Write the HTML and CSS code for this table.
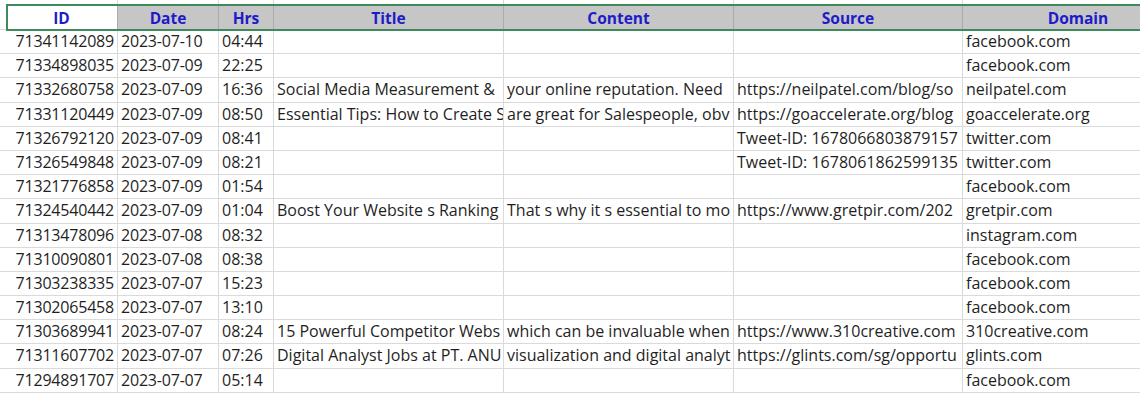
FILE: index.html
```html
<!DOCTYPE html>
<html lang="en">
<head>
<meta charset="utf-8">
<title>Sheet</title>
<link rel="stylesheet" href="styles.css">
</head>
<body>
<div class="sheet">
  <div class="row strip">
    <div class="cell lead"></div><div class="cell"></div><div class="cell"></div><div class="cell"></div><div class="cell"></div><div class="cell"></div><div class="cell"></div><div class="cell"></div>
  </div>
  <div class="row hdr">
    <div class="cell lead"></div>
    <div class="cell active">ID</div>
    <div class="cell">Date</div>
    <div class="cell">Hrs</div>
    <div class="cell">Title</div>
    <div class="cell">Content</div>
    <div class="cell">Source</div>
    <div class="cell">Domain</div>
    <div class="sel"></div>
  </div>

  <div class="row"><div class="cell lead"></div><div class="cell num">71341142089</div><div class="cell date">2023-07-10</div><div class="cell">04:44</div><div class="cell"></div><div class="cell"></div><div class="cell"></div><div class="cell">facebook.com</div></div>
  <div class="row"><div class="cell lead"></div><div class="cell num">71334898035</div><div class="cell date">2023-07-09</div><div class="cell">22:25</div><div class="cell"></div><div class="cell"></div><div class="cell"></div><div class="cell">facebook.com</div></div>
  <div class="row"><div class="cell lead"></div><div class="cell num">71332680758</div><div class="cell date">2023-07-09</div><div class="cell">16:36</div><div class="cell">Social Media Measurement &amp;</div><div class="cell">your online reputation. Need</div><div class="cell">https://neilpatel.com/blog/so</div><div class="cell">neilpatel.com</div></div>
  <div class="row"><div class="cell lead"></div><div class="cell num">71331120449</div><div class="cell date">2023-07-09</div><div class="cell">08:50</div><div class="cell">Essential Tips: How to Create S</div><div class="cell">are great for Salespeople, obv</div><div class="cell">https://goaccelerate.org/blog</div><div class="cell">goaccelerate.org</div></div>
  <div class="row"><div class="cell lead"></div><div class="cell num">71326792120</div><div class="cell date">2023-07-09</div><div class="cell">08:41</div><div class="cell"></div><div class="cell"></div><div class="cell">Tweet-ID: 1678066803879157</div><div class="cell">twitter.com</div></div>
  <div class="row"><div class="cell lead"></div><div class="cell num">71326549848</div><div class="cell date">2023-07-09</div><div class="cell">08:21</div><div class="cell"></div><div class="cell"></div><div class="cell">Tweet-ID: 1678061862599135</div><div class="cell">twitter.com</div></div>
  <div class="row"><div class="cell lead"></div><div class="cell num">71321776858</div><div class="cell date">2023-07-09</div><div class="cell">01:54</div><div class="cell"></div><div class="cell"></div><div class="cell"></div><div class="cell">facebook.com</div></div>
  <div class="row"><div class="cell lead"></div><div class="cell num">71324540442</div><div class="cell date">2023-07-09</div><div class="cell">01:04</div><div class="cell">Boost Your Website s Ranking</div><div class="cell">That s why it s essential to mo</div><div class="cell">https://www.gretpir.com/202</div><div class="cell">gretpir.com</div></div>
  <div class="row"><div class="cell lead"></div><div class="cell num">71313478096</div><div class="cell date">2023-07-08</div><div class="cell">08:32</div><div class="cell"></div><div class="cell"></div><div class="cell"></div><div class="cell">instagram.com</div></div>
  <div class="row"><div class="cell lead"></div><div class="cell num">71310090801</div><div class="cell date">2023-07-08</div><div class="cell">08:38</div><div class="cell"></div><div class="cell"></div><div class="cell"></div><div class="cell">facebook.com</div></div>
  <div class="row"><div class="cell lead"></div><div class="cell num">71303238335</div><div class="cell date">2023-07-07</div><div class="cell">15:23</div><div class="cell"></div><div class="cell"></div><div class="cell"></div><div class="cell">facebook.com</div></div>
  <div class="row"><div class="cell lead"></div><div class="cell num">71302065458</div><div class="cell date">2023-07-07</div><div class="cell">13:10</div><div class="cell"></div><div class="cell"></div><div class="cell"></div><div class="cell">facebook.com</div></div>
  <div class="row"><div class="cell lead"></div><div class="cell num">71303689941</div><div class="cell date">2023-07-07</div><div class="cell">08:24</div><div class="cell">15 Powerful Competitor Webs</div><div class="cell">which can be invaluable when</div><div class="cell">https://www.310creative.com</div><div class="cell">310creative.com</div></div>
  <div class="row"><div class="cell lead"></div><div class="cell num">71311607702</div><div class="cell date">2023-07-07</div><div class="cell">07:26</div><div class="cell">Digital Analyst Jobs at PT. ANU</div><div class="cell">visualization and digital analyt</div><div class="cell">https://glints.com/sg/opportu</div><div class="cell">glints.com</div></div>
  <div class="row"><div class="cell lead"></div><div class="cell num">71294891707</div><div class="cell date">2023-07-07</div><div class="cell">05:14</div><div class="cell"></div><div class="cell"></div><div class="cell"></div><div class="cell">facebook.com</div></div>
</div>
</body>
</html>
```
FILE: styles.css
```css
html, body {
  margin: 0;
  padding: 0;
  background: #ffffff;
  overflow: hidden;
}

.sheet {
  width: 1194px;
  display: flex;
  flex-direction: column;
  font-family: "Open Sans", "Liberation Sans", sans-serif;
  font-size: 16px;
  color: #1f1f1f;
}

.row {
  display: grid;
  grid-template-columns: 6px 112px 101px 55px 230px 230px 229px 231px;
  height: 24.2px;
}

.cell {
  box-sizing: border-box;
  border-right: 1px solid #dadada;
  border-bottom: 1px solid #dadada;
  padding: 0 3px;
  line-height: 22px;
  white-space: nowrap;
  overflow: hidden;
  text-overflow: clip;
}

.cell.lead {
  border-right: none;
  padding: 0;
}

.cell.num {
  text-align: right;
  letter-spacing: -0.2px;
}

.cell.date {
  letter-spacing: -0.2px;
}

.strip {
  height: 4px;
}

.strip .cell {
  border-bottom: none;
}

.hdr {
  position: relative;
  height: 26px;
}

.hdr .cell {
  background: #c6c6c6;
  border-right: 1px solid #ababab;
  border-bottom: 1px solid #ababab;
  color: #1c1cc8;
  font-weight: 700;
  font-size: 15.5px;
  text-align: center;
  padding-top: 2px;
  line-height: 24px;
}

.hdr .cell.lead {
  background: #ffffff;
  border-right: none;
  border-bottom: 1px solid #dadada;
}

.hdr .cell.active {
  background: #ffffff;
}

.sel {
  position: absolute;
  left: 6px;
  top: 0;
  right: -20px;
  bottom: -1px;
  border: 2px solid #3f8a5c;
  pointer-events: none;
}
```
